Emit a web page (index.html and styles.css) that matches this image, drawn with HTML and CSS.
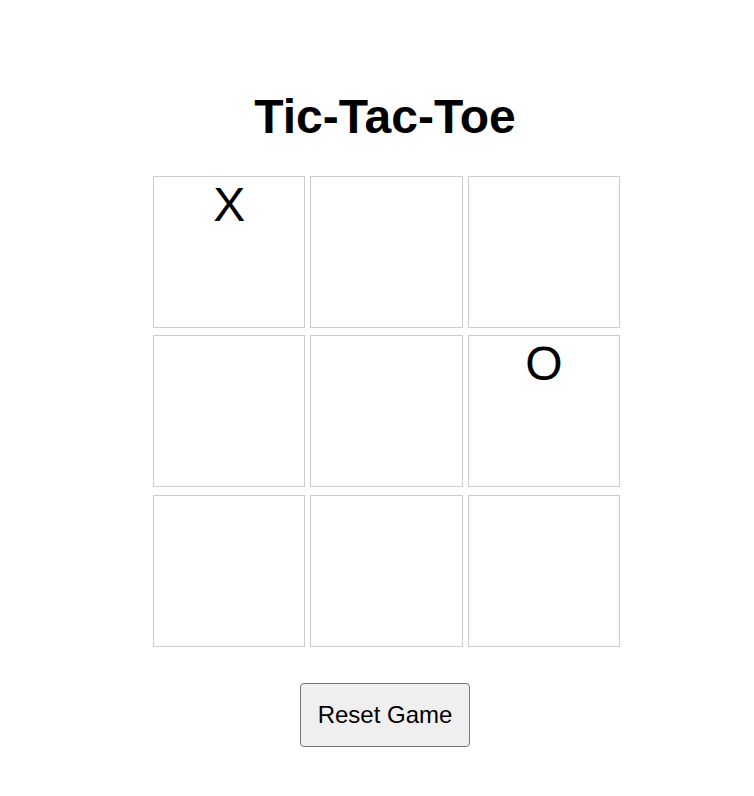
FILE: index.html
```html
<!DOCTYPE html>
<html lang="en">
<head>
<meta charset="utf-8">
<title>Tic-Tac-Toe</title>
<link rel="stylesheet" href="styles.css">
</head>
<body>
<main class="page">
  <h1 class="title">Tic-Tac-Toe</h1>
  <div class="board">
    <div class="cell">X</div>
    <div class="cell"></div>
    <div class="cell"></div>
    <div class="cell"></div>
    <div class="cell"></div>
    <div class="cell">O</div>
    <div class="cell"></div>
    <div class="cell"></div>
    <div class="cell"></div>
  </div>
  <button class="reset" type="button">Reset Game</button>
</main>
</body>
</html>
```

FILE: styles.css
```css
html, body {
  margin: 0;
  padding: 0;
  background: #ffffff;
}

body {
  font-family: "Liberation Sans", Arial, sans-serif;
  color: #000000;
}

.page {
  display: flex;
  flex-direction: column;
  align-items: center;
  padding: 89px 0 0 16px;
}

.title {
  margin: 0 0 32px;
  font-size: 48px;
  font-weight: bold;
  line-height: normal;
}

.board {
  display: grid;
  grid-template-columns: repeat(3, 1fr);
  grid-template-rows: repeat(3, 152px);
  column-gap: 5px;
  row-gap: 7.4px;
  width: 467px;
  margin: 0 0 36.2px 3px;
}

.cell {
  box-sizing: border-box;
  height: 152px;
  border: 1px solid #cccccc;
  background: #ffffff;
  font-size: 48px;
  line-height: normal;
  text-align: center;
}

.reset {
  box-sizing: border-box;
  height: 64px;
  padding: 0 16.5px;
  font-family: "Liberation Sans", Arial, sans-serif;
  font-size: 24px;
  color: #000000;
  background: #efefef;
  border: 1px solid #767676;
  border-radius: 4px;
}
```
